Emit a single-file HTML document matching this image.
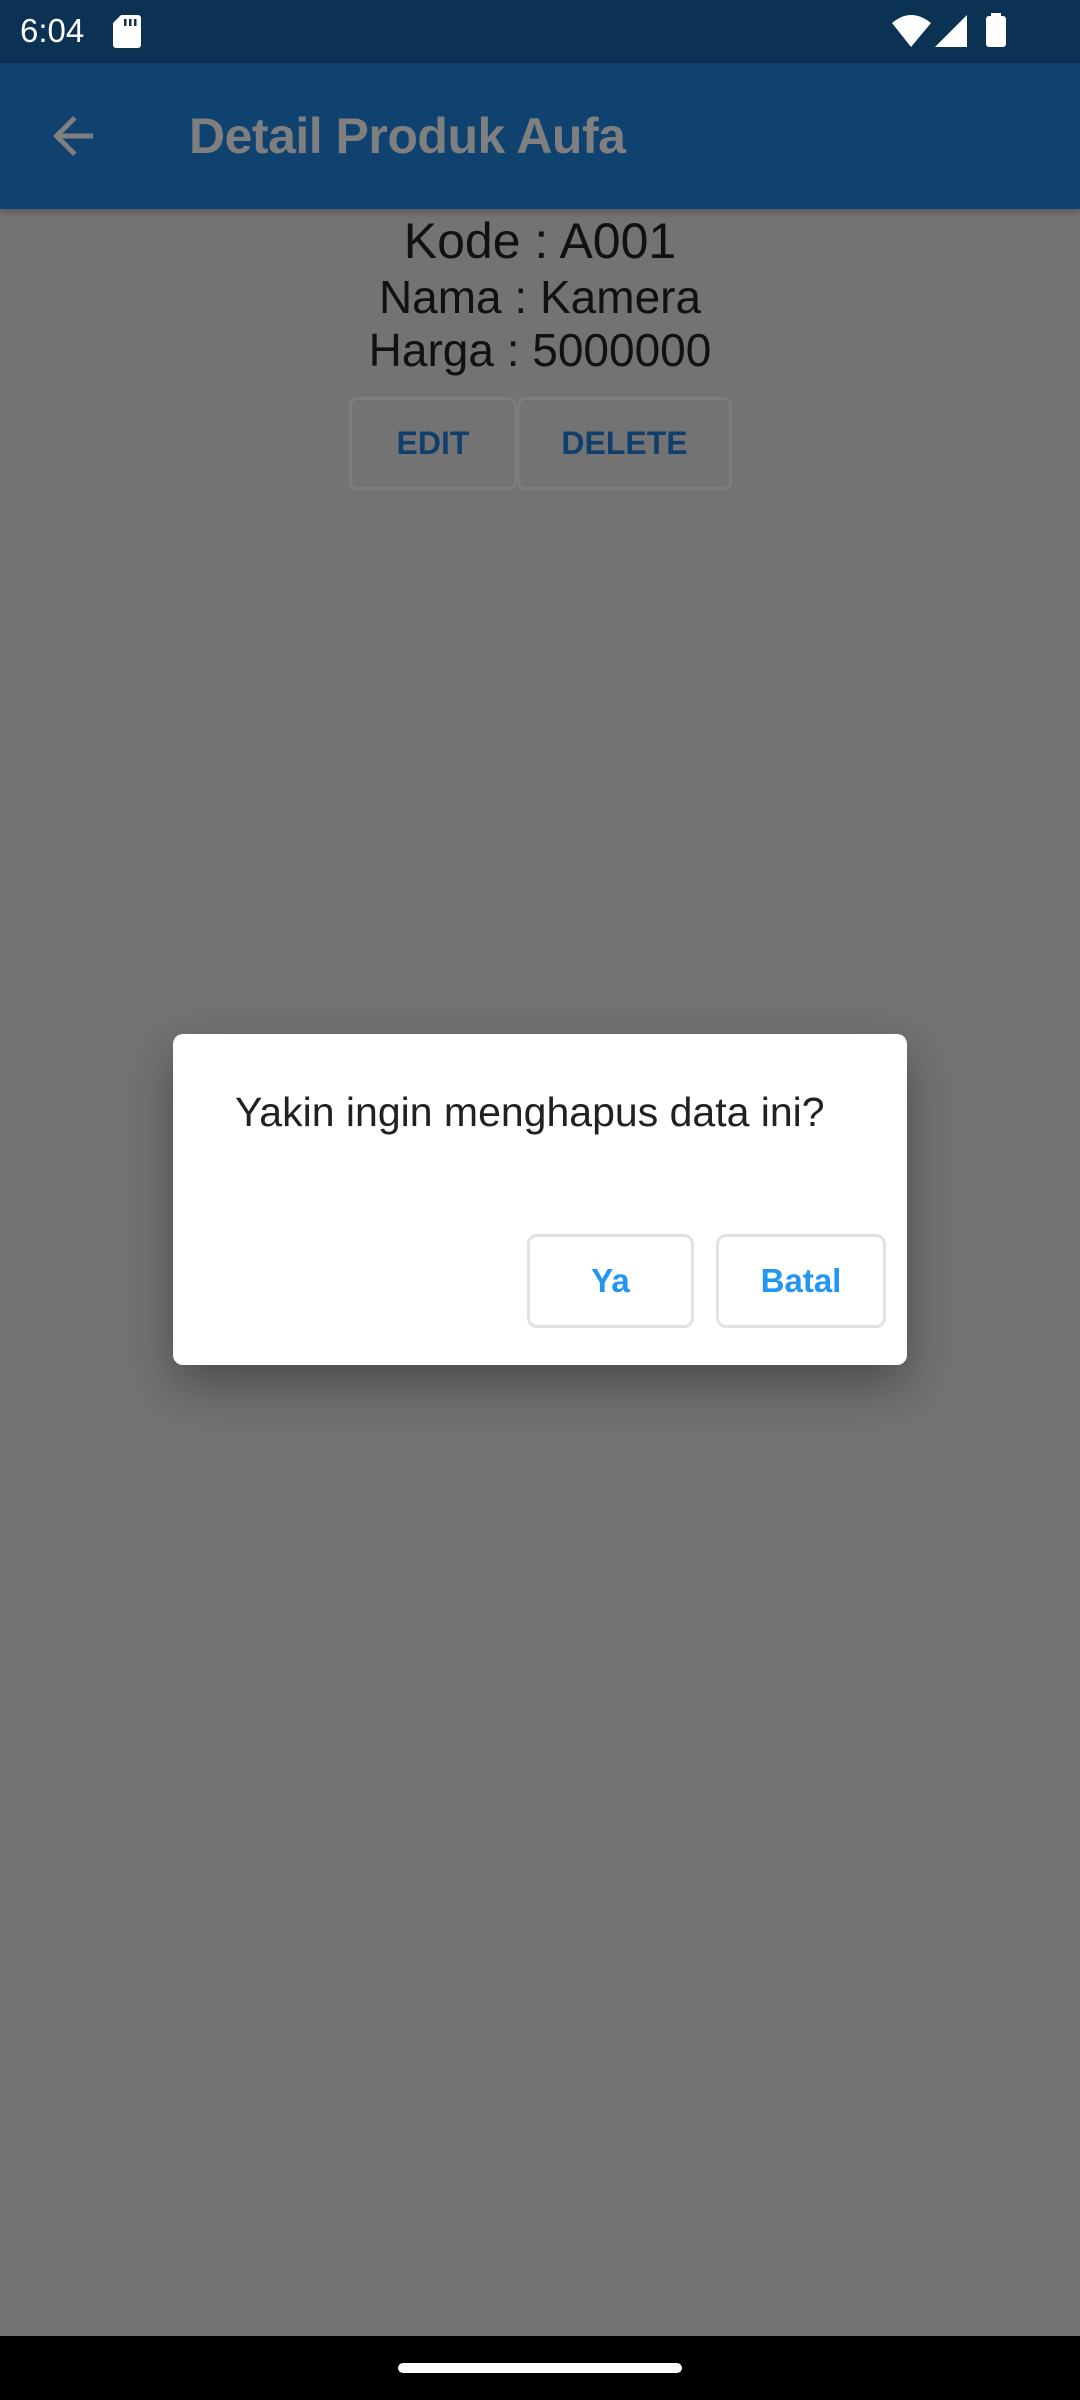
<!DOCTYPE html>
<html><head><meta charset="utf-8">
<style>
*{margin:0;padding:0;box-sizing:border-box}
html,body{width:1080px;height:2400px;overflow:hidden;background:#737373;font-family:"Liberation Sans",sans-serif}
.abs{position:absolute}
#status{left:0;top:0;width:1080px;height:63px;background:#0b3153}
#appbar{left:0;top:63px;width:1080px;height:146px;background:#10426f;box-shadow:0 3px 6px rgba(0,0,0,.25)}
.c{left:0;width:1080px;text-align:center;color:#111}
.ob{border:3px solid #7d7d7d;border-radius:8px;color:#103f6e;font-weight:bold;font-size:32px;display:flex;align-items:center;justify-content:center}
#dlg{left:173px;top:1034px;width:734px;height:331px;background:#fff;border-radius:10px;box-shadow:0 20px 50px rgba(0,0,0,.35)}
.db{border:3px solid #e2e2e2;border-radius:10px;color:#2196f3;font-weight:bold;font-size:33px;display:flex;align-items:center;justify-content:center}
#nav{left:0;top:2336px;width:1080px;height:64px;background:#000}
</style></head><body>
<div id="status" class="abs">
 <div class="abs" style="left:20px;top:12px;color:#fff;font-size:33px">6:04</div>
 <svg class="abs" style="left:113px;top:15px" width="28" height="33" viewBox="0 0 28 33"><path d="M8 0H25a3 3 0 0 1 3 3V30a3 3 0 0 1-3 3H3a3 3 0 0 1-3-3V8Z" fill="#fff"/><rect x="11" y="4" width="2.5" height="7" fill="#0b3153"/><rect x="16" y="4" width="2.5" height="7" fill="#0b3153"/><rect x="21" y="4" width="2.5" height="7" fill="#0b3153"/></svg>
 <svg class="abs" style="left:890px;top:13px" width="120" height="36" viewBox="0 0 120 36">
  <path d="M2 10 Q21 -6 41 10 L21 34 Z" fill="#fff"/>
  <path d="M45 34 L77 2 L77 34 Z" fill="#fff"/>
  <rect x="96" y="3" width="20" height="31" rx="3" fill="#fff"/><rect x="101" y="0" width="10" height="4" fill="#fff"/>
 </svg>
</div>
<div id="appbar" class="abs">
 <svg class="abs" style="left:43px;top:43px" width="60" height="60" viewBox="0 0 24 24"><path d="M20 11H7.83l5.59-5.59L12 4l-8 8 8 8 1.41-1.41L7.83 13H20v-2z" fill="#7f7f7f"/></svg>
 <div class="abs" style="left:189px;top:44px;color:#7f7f7f;font-size:50px;font-weight:bold;letter-spacing:-0.5px">Detail Produk Aufa</div>
</div>
<div class="abs c" style="top:212px;font-size:50px">Kode : A001</div>
<div class="abs c" style="top:270px;font-size:46px">Nama : Kamera</div>
<div class="abs c" style="top:323px;font-size:46px">Harga : 5000000</div>
<div class="abs ob" style="left:349px;top:397px;width:168px;height:93px">EDIT</div>
<div class="abs ob" style="left:517px;top:397px;width:215px;height:93px">DELETE</div>
<div id="dlg" class="abs">
 <div class="abs" style="left:62px;top:55px;font-size:41px;color:#212121">Yakin ingin menghapus data ini?</div>
 <div class="abs db" style="left:354px;top:200px;width:167px;height:94px">Ya</div>
 <div class="abs db" style="left:543px;top:200px;width:170px;height:94px">Batal</div>
</div>
<div id="nav" class="abs"><div class="abs" style="left:398px;top:27px;width:284px;height:10px;border-radius:5px;background:#fff"></div></div>
</body></html>
